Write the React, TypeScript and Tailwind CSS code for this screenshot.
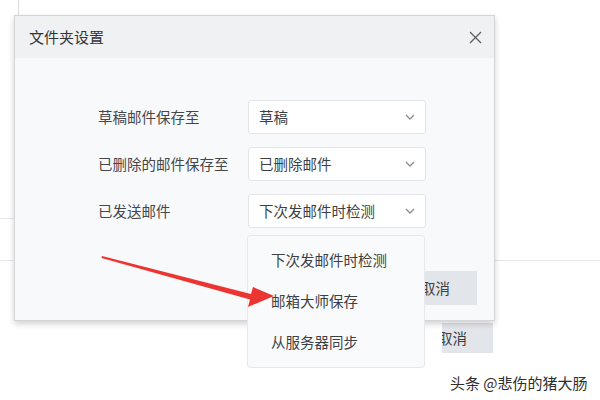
import React from "react";

const font = { fontFamily: '"Noto Sans CJK SC", "Noto Sans", sans-serif' };

function Chevron() {
  return (
    <svg width="10" height="6" viewBox="0 0 10 6" className="shrink-0">
      <path d="M1 1 L5 5 L9 1" fill="none" stroke="#8a8d92" strokeWidth="1.3" />
    </svg>
  );
}

function Select({ value }: { value: string }) {
  return (
    <div className="w-[178px] h-[34px] bg-white border border-[#e3e5e9] rounded-[3px] flex items-center justify-between pl-[10px] pr-[10px] text-[14.5px] text-[#3d3f43]">
      <span>{value}</span>
      <Chevron />
    </div>
  );
}

export default function App() {
  const rows: [string, string][] = [
    ["草稿邮件保存至", "草稿"],
    ["已删除的邮件保存至", "已删除邮件"],
    ["已发送邮件", "下次发邮件时检测"],
  ];
  return (
    <div className="relative w-[600px] h-[400px] bg-white overflow-hidden" style={font}>
      {/* background lines */}
      <div className="absolute left-[18px] top-0 w-px h-[15px] bg-[#dcdde0]" />
      <div className="absolute left-0 top-[218px] w-[14px] h-px bg-[#e6e7ea]" />
      <div className="absolute left-0 top-[260px] w-[600px] h-px bg-[#e6e7ea]" />

      {/* ghost cancel button behind */}
      <div className="absolute left-[442px] top-[323px] w-[51px] h-[30px] bg-[#e2e5ea] overflow-hidden">
        <span className="absolute left-[-4px] top-[4px] text-[14.5px] text-[#3d3f43] leading-[22px]">取消</span>
      </div>

      {/* dialog */}
      <div className="relative mt-[15px] ml-[14px] w-[481px] h-[306px] border border-[#d3d5d9] bg-[#f8f9fb] shadow-[0_3px_6px_rgba(0,0,0,0.18)] flex flex-col">
        <div className="h-[42px] bg-[#f0f1f3] flex items-center justify-between pl-[14px] pr-[12px]">
          <span className="text-[15px] text-[#333437]">文件夹设置</span>
          <svg width="13" height="13" viewBox="0 0 13 13">
            <path d="M1 1 L12 12 M12 1 L1 12" stroke="#5f6166" strokeWidth="1.4" />
          </svg>
        </div>
        <div className="flex flex-col gap-[13px] pt-[42px] pl-[83px]">
          {rows.map(([label, value]) => (
            <div key={label} className="flex items-center">
              <span className="w-[150px] text-[14.5px] text-[#45474b]">{label}</span>
              <Select value={value} />
            </div>
          ))}
        </div>
        <div className="flex justify-end pr-[17px] pt-[43px]">
          <div className="w-[83px] h-[34px] bg-[#e2e5ea] flex items-center justify-center text-[14.5px] text-[#3d3f43]">
            取消
          </div>
        </div>
      </div>

      {/* dropdown */}
      <div className="absolute left-[247px] top-[235px] w-[178px] h-[133px] bg-[#f9fafc] border border-[#e6e8eb] rounded-[3px] flex flex-col pt-[13px] pl-[23px] gap-[19px] text-[14.5px] text-[#3d3f43] leading-[22px]">
        <span>下次发邮件时检测</span>
        <span>邮箱大师保存</span>
        <span>从服务器同步</span>
      </div>

      {/* arrow */}
      <svg className="absolute left-0 top-0" width="600" height="400" viewBox="0 0 600 400">
        <path
          d="M102 256 L251 294 L253 287 L274 296 L248 307 L250 299.5 L101.5 258 Z"
          fill="#ec3530"
        />
      </svg>

      {/* watermark */}
      <div
        className="absolute left-[450px] top-[372px] text-[15px] text-[#2e2e2e] leading-[22px]"
        style={{ textShadow: "0 0 2px #fff, 0 0 2px #fff" }}
      >
        头条 @悲伤的猪大肠
      </div>
    </div>
  );
}
